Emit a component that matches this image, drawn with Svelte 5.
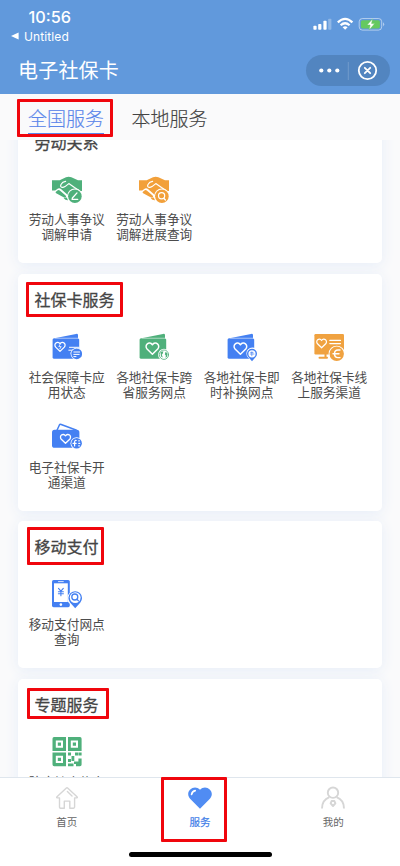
<script>
  const sections = [
    {
      title: '劳动关系',
      items: [
        { icon: 'shake-edit', color: '#4fb07b', lines: ['劳动人事争议', '调解申请'] },
        { icon: 'shake-find', color: '#f2a03a', lines: ['劳动人事争议', '调解进展查询'] }
      ]
    },
    {
      title: '社保卡服务',
      mark: { left: 8, top: 8, width: 97, height: 35 },
      items: [
        { icon: 'card-status', color: '#4480f2', lines: ['社会保障卡应', '用状态'] },
        { icon: 'card-globe', color: '#4fb07b', lines: ['各地社保卡跨', '省服务网点'] },
        { icon: 'card-pin', color: '#4480f2', lines: ['各地社保卡即', '时补换网点'] },
        { icon: 'screen', color: '#f0a240', lines: ['各地社保卡线', '上服务渠道'] },
        { icon: 'wallet', color: '#4480f2', lines: ['电子社保卡开', '通渠道'] }
      ]
    },
    {
      title: '移动支付',
      mark: { left: 9, top: 6, width: 77, height: 38 },
      items: [{ icon: 'phone', color: '#4480f2', lines: ['移动支付网点', '查询'] }]
    },
    {
      title: '专题服务',
      mark: { left: 9, top: 9, width: 82, height: 31 },
      items: [{ icon: 'qr', color: '#4fb07b', lines: ['防疫健康信息', '码'] }]
    }
  ];
  const heart = 'M0 4.6 L-4.1 .6 C-6.6-2.4-2.4-6-0-2.7 C2.4-6 6.6-2.4 4.1 .6Z';
</script>

{#snippet glyph(name, color)}
  <svg class="glyph" viewBox="0 0 30 30" fill={color} stroke-linecap="round" stroke-linejoin="round">
    {#if name.startsWith('shake')}
      <path d="M0 6.2H7.6L14 3.2Q16.6 2.1 19.4 3.2L26 6.2H30V17H0Z" />
      <path d="M5 14H28V19L20 24 13 21Z" />
      <path d="M13.6 7.4Q10.4 8 9.3 10 7.8 12.4 9.6 13.2 11.2 13.7 13 12.6L16.8 9.6 22.5 13.6 27 16.6" fill="none" stroke="#fff" stroke-width="1.2" />
      <path d="M0 16.6H3.2L6 14.6Q7.6 13.8 9 15L17 22 13 29H0Z" fill="#fff" />
      <path d="M3.9 17.8 5.8 16.3Q6.8 15.7 7.8 16.5L13.6 21.4Q14.6 22.6 13.6 23.4 12.7 24 11.5 23.2L4.2 19.2Q3 18.5 3.9 17.8Z" />
      <path d="M11.6 24.2 15 23.4 16 26.2Q13.6 26.4 11.6 24.2Z" />
      <circle cx="22.9" cy="22.3" r="7.8" fill="#fff" />
      <circle cx="22.9" cy="22.3" r="6.8" />
      {#if name === 'shake-edit'}
        <path d="M20.4 24 25 18.9M20.4 24 20.1 25.4H25.7" fill="none" stroke="#fff" stroke-width="1.3" />
      {:else}
        <circle cx="22.6" cy="21.8" r="3.1" fill="none" stroke="#fff" stroke-width="1.2" />
        <path d="M24.8 24.2 26.4 26" stroke="#fff" stroke-width="1.3" />
      {/if}
    {:else if name.startsWith('card')}
      <path d="M1.2 6.4 24 1.9Q26 1.5 26 3.2V6.4Z" />
      <rect x=".6" y="6.2" width="26.6" height="20.6" rx="1.6" />
      <path d="M3 6.2H27" stroke="#fff" stroke-opacity=".65" stroke-width=".7" />
      {#if name === 'card-status'}
        <path d={heart} transform="translate(8 14.5) scale(1.05)" fill="none" stroke="#fff" stroke-width="1.2" />
        <path d="M8.4 11.9 6.8 14.6H9.2L7.8 16.8" fill="none" stroke="#fff" stroke-width=".8" />
        <path d="M17.5 15.3H27M16.8 18.2H21M18.8 21H22" stroke="#fff" stroke-width="1" />
        <circle cx="24.7" cy="21.8" r="6.1" fill="#fff" />
        <circle cx="24.7" cy="21.8" r="5.4" />
        <path d="M21.8 20H27.6M21.8 22.4H27.2M21.8 24.6H24" stroke="#fff" stroke-width="1" />
      {:else}
        <path d={heart} transform="translate(13.4 16.3) scale(1.3)" fill="none" stroke="#fff" stroke-width="1.15" />
        {#if name === 'card-globe'}
          <circle cx="25" cy="22.7" r="5.9" fill="#fff" />
          <circle cx="25" cy="22.7" r="4.7" fill="none" stroke={color} stroke-width=".8" />
          <path d="M21.5 20 24.4 19.2 23.8 21.6 22.8 22.8 23.8 25.6 22 24.6Z" />
          <path d="M26.6 19.8 28.6 21.6 28.2 24.4 26.6 26 26.8 23.6 25.8 22.3Z" />
        {:else}
          <path d="M25 29.8 21 25.4A5.8 5.8 0 1 1 29.4 25.4Z" fill="#fff" />
          <path d="M25 29.2 21.5 25.3A5 5 0 1 1 28.5 25.3Z" />
          <circle cx="25" cy="21.8" r="3.6" fill="#fff" />
          <path d="M23.2 22H27M24.8 20V23.8M23.6 20.4H26" stroke={color} stroke-width=".7" />
        {/if}
      {/if}
    {:else if name === 'screen'}
      <rect x=".4" y="2" width="29.6" height="20.5" rx="1.2" />
      <path d="M5.5 25.8H13M11.5 22V25.5" stroke={color} stroke-width="2" />
      <path d={heart} transform="translate(7.6 11.2)" fill="none" stroke="#fff" stroke-width="1.2" />
      <path d="M15.8 8.4H26.5M15.8 11.6H26.5" stroke="#fff" stroke-width="1.1" />
      <circle cx="22.7" cy="21.8" r="8.1" fill="#fff" />
      <circle cx="22.7" cy="21.8" r="7.2" />
      <path d="M26 18H24Q20.5 18 20.5 21.8T24 25.6H26M19 21.8H25" fill="none" stroke="#fff" stroke-width="1.4" />
    {:else if name === 'wallet'}
      <path d="M5 8.2 7.3 3.2Q7.9 2 9.2 2.5L24 8" fill="none" stroke={color} stroke-width="1.5" />
      <rect x="0" y="7.8" width="27.4" height="18" rx="2.6" />
      <path d={heart} transform="translate(13.5 16.6) scale(1.03)" fill="none" stroke="#fff" stroke-width="1.3" />
      <circle cx="24.6" cy="21.3" r="6.1" fill="#fff" />
      <circle cx="24.6" cy="21.3" r="5.3" />
      <path d="M24.2 18.5Q22.6 18 22.6 20.5V24M21 21.3H24.2M26.7 18.8H27.4M26.7 21.3H27.8M26.7 23.8H27.4" fill="none" stroke="#fff" stroke-width="1.2" />
    {:else if name === 'phone'}
      <rect x="0" y="1" width="17.8" height="27.2" rx="1.6" />
      <path d="M2 4.3H15.8V23H2Z" fill="#fff" />
      <path d="M6.5 2.6H11.3" stroke="#fff" stroke-width=".8" />
      <circle cx="8.9" cy="25.6" r="1.3" fill="#fff" />
      <path d="M6.5 9.3 8.9 12.2 11.3 9.3M8.9 12.2V16.7M6.4 12.7H11.4M6.4 14.8H11.4" fill="none" stroke={color} stroke-width="1.1" />
      <path d="M23.2 30 16.5 23.5A7.8 7.8 0 1 1 29.9 23.5Z" fill="#fff" />
      <path d="M23.2 29.3 18 23.4A6.8 6.8 0 1 1 28.4 23.4Z" />
      <circle cx="23.2" cy="18.6" r="5.4" fill="#fff" />
      <circle cx="22.8" cy="18" r="3" fill="none" stroke={color} stroke-width="1.3" />
      <path d="M24.9 20.2 26.5 21.9" stroke={color} stroke-width="1.3" />
    {:else}
      <path fill-rule="evenodd" d="M2 0H14V14H.5V1.8Q.5 0 2 0ZM3.8 3.6V10.8H11V3.6ZM16 0H28Q29.6 0 29.6 1.8V14H16ZM18.8 3.6V10.8H26V3.6ZM.5 15.6H14V29.2H2.2Q.5 29.2.5 27.4ZM3.8 18.8V26H11V18.8Z" />
      <path d="M5.8 5.6H9V8.8H5.8ZM20.8 5.6H24V8.8H20.8ZM5.8 20.8H9V24H5.8ZM16 15.6H19V18.5H16ZM19.5 19H22.3V24H19.5ZM23 15.6H26V18.5H23ZM26.4 15.6H29.6V18.5H26.4ZM16 22H19V25H16ZM16 26.6H21.5V29.2H16ZM22 24.6H26.4V21.5H29.6V27.4Q29.6 29.2 28 29.2H24V27H22Z" />
    {/if}
  </svg>
{/snippet}

<div class="app">
  <header>
    <div class="status">
      <div>
        <div class="time">10:56</div>
        <div class="back">
          <svg width="8" height="8" viewBox="0 0 8 8"><path d="M0 4 7.6 .5V7.5Z" fill="#fff" /></svg>
          <span>Untitled</span>
        </div>
      </div>
      <svg class="signals" width="74" height="16" viewBox="0 0 74 16" fill="#fff">
        <rect x="2.4" y="9.7" width="3.2" height="4" rx=".8" />
        <rect x="7.2" y="7.9" width="3.2" height="5.8" rx=".8" />
        <rect x="12.4" y="4.8" width="3.2" height="8.9" rx=".8" />
        <rect x="17.2" y="2.8" width="3.2" height="10.9" rx=".8" opacity=".3" />
        <g fill="none" stroke="#fff" stroke-width="2.2">
          <path d="M26.8 6.4Q34.1-.6 41.4 6.4" />
          <path d="M29.6 9.3Q34.1 5.2 38.6 9.3" />
        </g>
        <path d="M34.1 13.7 31.6 11.2Q34.1 9.4 36.6 11.2Z" />
        <rect x="48.2" y="2.5" width="22.5" height="11.6" rx="3.2" fill="none" stroke="#fff" stroke-opacity=".5" />
        <path d="M72 6.2Q74.4 8.2 72 10.4Z" opacity=".5" />
        <rect x="49.9" y="4.2" width="19" height="8.2" rx="1.6" fill="#65c960" />
        <path d="M61.5 2.9 56 9H59.1L58.2 14 63.7 7.6H60.6Z" stroke="#65c960" stroke-width=".5" />
      </svg>
    </div>
    <div class="titlebar">
      <h1>电子社保卡</h1>
      <div class="capsule">
        <svg width="84" height="32" viewBox="0 0 84 32">
          <g fill="#fff"><circle cx="15.3" cy="15.5" r="2.1" /><circle cx="23.3" cy="15.5" r="2.1" /><circle cx="31.3" cy="15.5" r="2.1" /></g>
          <path d="M42.3 7V25" stroke="#fff" stroke-opacity=".18" />
          <circle cx="61.5" cy="15.5" r="8.7" fill="none" stroke="#fff" stroke-width="1.8" />
          <path d="M58.8 12.8 64.2 18.2M64.2 12.8 58.8 18.2" stroke="#fff" stroke-width="1.8" stroke-linecap="round" />
        </svg>
      </div>
    </div>
  </header>

  <nav class="tabs">
    <span class="tab active">全国服务</span>
    <span class="tab">本地服务</span>
    <i class="mark" style="left:17px;top:5px;width:96px;height:38px"></i>
  </nav>

  <main>
    <div class="list">
      {#each sections as section}
        <section>
          <h2>{section.title}</h2>
          <div class="grid">
            {#each section.items as item}
              <div class="item">
                {@render glyph(item.icon, item.color)}
                <p><span>{item.lines[0]}</span><span>{item.lines[1]}</span></p>
              </div>
            {/each}
          </div>
          {#if section.mark}
            <i class="mark" style="left:{section.mark.left}px;top:{section.mark.top}px;width:{section.mark.width}px;height:{section.mark.height}px"></i>
          {/if}
        </section>
      {/each}
    </div>
  </main>

  <footer>
    <div class="bottom">
      <div class="entry">
        <svg width="24" height="24" viewBox="0 0 24 24" fill="none" stroke="#d6d6d6" stroke-width="1.4" stroke-linejoin="round" stroke-linecap="round">
          <path d="M4.5 11.9H2.2Q1.2 11.7 2 10.8L11.1 2.2Q12 1.4 12.9 2.2L22 10.8Q22.8 11.7 21.8 11.9H19.6V21.1Q19.6 22.2 18.5 22.2H14.8V15.1H9.3V22.2H5.6Q4.5 22.2 4.5 21.1Z" />
          <path d="M12.4 5.6 17 9.9" />
        </svg>
        <span>首页</span>
      </div>
      <div class="entry on">
        <svg width="24" height="24" viewBox="0 0 24 24">
          <path d="M12 22.8 2.1 12.8C-4 5.6 6-2.6 12 3.7 18-2.6 28 5.6 21.9 12.8Z" fill="#508cf3" />
          <path d="M3.6 8.3Q4.2 5.2 7.2 4.6" fill="none" stroke="#fff" stroke-width="1.7" stroke-linecap="round" />
        </svg>
        <span>服务</span>
        <i class="mark" style="left:28px;top:-1px;width:66px;height:65px"></i>
      </div>
      <div class="entry">
        <svg width="24" height="24" viewBox="0 0 24 24" fill="none" stroke="#d6d6d6" stroke-width="1.9">
          <circle cx="12" cy="6.7" r="5.2" />
          <path d="M8.4 11.1Q1 14 1 22.4M15.6 11.1Q23 14 23 22.4" />
          <path d="M12 20 9.6 17.4 10.6 15H13.4L14.4 17.4Z" stroke-linejoin="round" />
        </svg>
        <span>我的</span>
      </div>
    </div>
    <div class="home"></div>
  </footer>
</div>

<style>
  :global(body) { margin: 0; }
  .app {
    width: 400px; height: 866px; overflow: hidden;
    display: flex; flex-direction: column;
    background: #fafafb; color: #444;
    font-family: "Noto Sans CJK SC", sans-serif;
  }
  header { height: 94px; flex: none; background: #6199dc; color: #fff; }
  .status { display: flex; justify-content: space-between; height: 47px; box-sizing: border-box; padding: 8px 15px 0 11px; }
  .time { margin-left: 17.5px; font: 500 16.3px/18px Inter, sans-serif; }
  .back { display: flex; align-items: center; gap: 5px; margin-top: 2.5px; font: 12px/15px Inter, sans-serif; letter-spacing: .1px; }
  .signals { margin-top: 8px; }
  .titlebar { display: flex; align-items: center; justify-content: space-between; height: 47px; padding: 0 10px 0 18px; }
  h1 { margin: -2px 0 0; font-size: 20px; line-height: 30px; font-weight: 400; letter-spacing: .2px; }
  .capsule { height: 31px; width: 84px; border-radius: 16px; background: #5285c0; }
  .capsule svg { display: block; }
  .tabs { position: relative; display: flex; gap: 27.5px; height: 46px; flex: none; box-sizing: border-box; padding: 9px 28px 0; }
  .tab { font-size: 19px; line-height: 30px; height: 30px; font-weight: 300; -webkit-text-stroke: .15px; }
  .active { color: #5a86ea; border-bottom: 1px solid #5a86ea; }
  .mark { position: absolute; box-sizing: border-box; border: 3px solid #f0060d; border-radius: 1px; z-index: 3; }
  main { height: 637px; flex: none; overflow: hidden; }
  .list { display: flex; flex-direction: column; gap: 11px; margin-top: -24.5px; padding: 0 18px; }
  section { position: relative; box-sizing: border-box; padding: 0 5px 21px; background: #fff; border-radius: 5px; box-shadow: 0 2px 14px #e6edf8; }
  section:nth-child(n + 3) { margin-top: -.3px; }
  h2 { margin: 0; padding: 12px 0 20px 11.5px; font-size: 16px; line-height: 26px; font-weight: 400; -webkit-text-stroke: .3px #444; }
  section:first-child h2 { padding: 13px 0 19px 11.5px; }
  .grid { display: grid; grid-template-columns: repeat(4, 87.5px); row-gap: 22px; }
  .item { display: flex; flex-direction: column; align-items: center; gap: 7.2px; height: 68px; }
  .glyph { width: 30px; height: 30px; flex: none; }
  p { margin: 0; display: flex; flex-direction: column; align-items: center; font-size: 12.7px; line-height: 15px; white-space: nowrap; color: #4c4c4c; }
  footer { position: relative; flex: 1; background: #fff; border-top: 1px solid #dfe6ed; display: flex; flex-direction: column; align-items: center; box-sizing: border-box; }
  .bottom { display: flex; width: 100%; height: 75px; }
  .entry { position: relative; flex: 1; display: flex; flex-direction: column; align-items: center; padding-top: 8px; color: #666; }
  .entry span { margin-top: 3.5px; font-size: 10.5px; line-height: 16px; }
  .entry.on { color: #3f7ee8; }
  .entry.on span { -webkit-text-stroke: .2px; }
  .home { width: 143px; height: 5px; margin-top: -1px; border-radius: 3px; background: #000; }
</style>
